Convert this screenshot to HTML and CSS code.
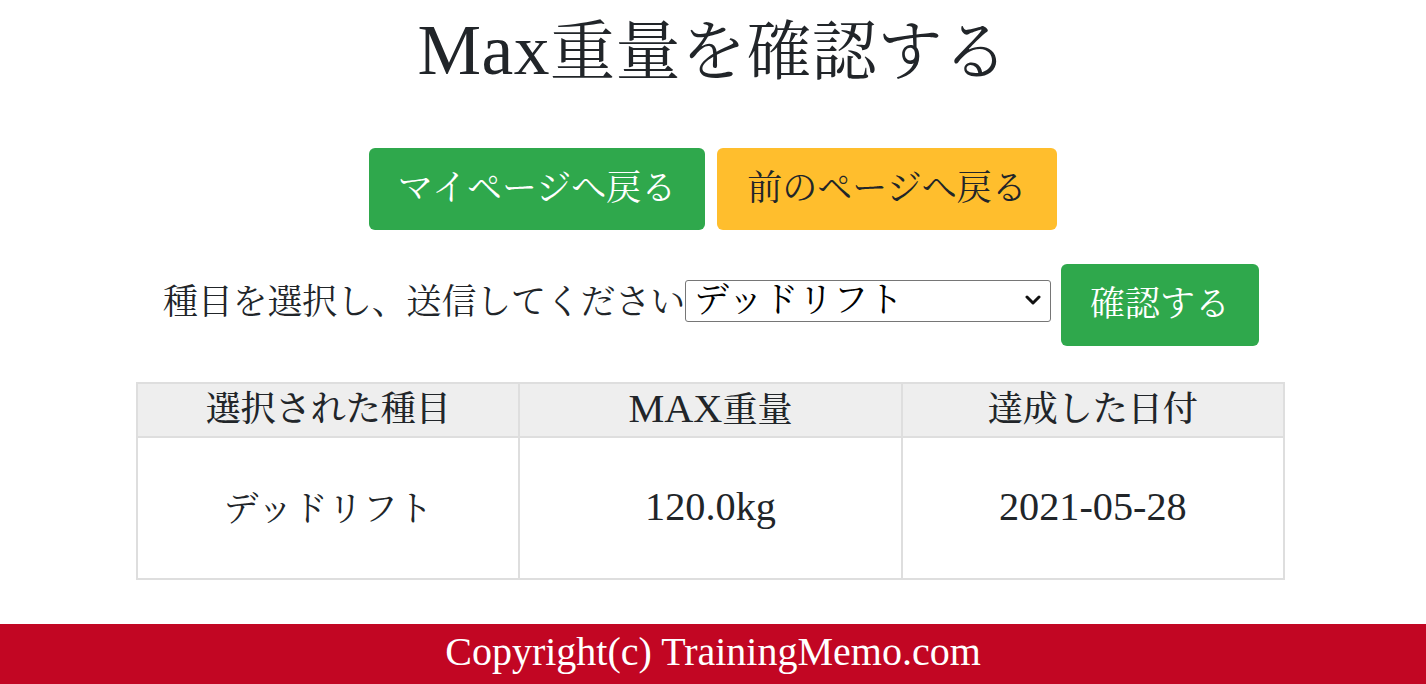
FILE: index.html
```html
<!DOCTYPE html>
<html lang="ja">
<head>
<meta charset="utf-8">
<title>Max重量を確認する</title>
<link rel="stylesheet" href="styles.css">
</head>
<body>
<main class="page">
  <h1 class="title"><span class="lat">Max</span>重量を確認する</h1>
  <div class="nav-buttons">
    <a class="btn btn-green btn-mypage" href="#">マイページへ戻る</a>
    <a class="btn btn-yellow" href="#">前のページへ戻る</a>
  </div>
  <form class="pick-form">
    <label class="pick-label" for="kind">種目を選択し、送信してください</label>
    <div class="select-wrap">
      <select id="kind" class="pick-select">
        <option>デッドリフト</option>
        <option>ベンチプレス</option>
        <option>スクワット</option>
      </select>
      <svg class="chevron" width="16" height="12" viewBox="0 0 16 12" aria-hidden="true">
        <path d="M2 3 L8 9 L14 3" fill="none" stroke="#111" stroke-width="3" stroke-linecap="round" stroke-linejoin="round"/>
      </svg>
    </div>
    <button type="button" class="btn btn-green btn-submit">確認する</button>
  </form>
  <table class="result">
    <thead>
      <tr><th>選択された種目</th><th><span class="lat">MAX</span>重量</th><th>達成した日付</th></tr>
    </thead>
    <tbody>
      <tr><td>デッドリフト</td><td><span class="lat">120.0kg</span></td><td><span class="lat">2021-05-28</span></td></tr>
    </tbody>
  </table>
</main>
<footer class="footer">Copyright(c) TrainingMemo.com</footer>
</body>
</html>
```
FILE: styles.css
```css
html, body {
  margin: 0;
  padding: 0;
}
body {
  font-family: "Liberation Serif", "Noto Serif CJK JP", "Noto Sans CJK JP", serif;
  color: #212529;
  background: #fff;
  display: flex;
  flex-direction: column;
  min-height: 684px;
}
.page {
  display: flex;
  flex-direction: column;
  align-items: center;
}
.title {
  margin: 14px 0 0;
  font-size: 65px;
  line-height: 77px;
  font-weight: normal;
  letter-spacing: 0.5px;
}
.title .lat {
  font-size: 1.1em;
  line-height: 0;
}
.nav-buttons {
  margin-top: 57px;
  display: flex;
  gap: 12px;
}
.btn {
  display: inline-block;
  box-sizing: border-box;
  height: 82px;
  padding: 0;
  font-family: inherit;
  font-size: 35px;
  line-height: 82px;
  border: none;
  border-radius: 6px;
  text-decoration: none;
  text-align: center;
  white-space: nowrap;
  cursor: pointer;
}
.btn-green {
  background: #2fa84c;
  color: #fff;
}
.btn-mypage {
  width: 336px;
}
.btn-yellow {
  background: #ffbe2d;
  color: #212529;
  width: 340px;
}
.pick-form {
  margin-top: 34px;
  display: flex;
  align-items: center;
  margin-right: 4px;
}
.pick-label {
  font-size: 35px;
  line-height: 42px;
  letter-spacing: -0.2px;
  margin-bottom: 4px;
}
.select-wrap {
  position: relative;
  display: flex;
  margin-bottom: 8px;
}
.pick-select {
  box-sizing: border-box;
  width: 366px;
  height: 42px;
  font-family: inherit;
  font-size: 35px;
  line-height: 40px;
  padding: 0 30px 2px 8px;
  border: 1px solid #767676;
  border-radius: 3px;
  background: #fff;
  color: #000;
  appearance: none;
  -webkit-appearance: none;
}
.chevron {
  position: absolute;
  right: 10px;
  top: 14px;
  pointer-events: none;
}
.btn-submit {
  margin-left: 10px;
  width: 198px;
}
.result {
  margin-top: 36px;
  margin-right: 5px;
  width: 1149px;
  border-collapse: collapse;
  table-layout: fixed;
  font-size: 35px;
}
.result .lat {
  font-size: 1.15em;
}
.result th,
.result td {
  border: 2px solid #dedede;
  text-align: center;
  padding: 0;
}
.result th {
  background: #eeeeee;
  height: 50px;
  line-height: 50px;
  font-weight: 500;
}
.result td {
  height: 136px;
  padding-bottom: 4px;
}
.footer {
  margin-top: auto;
  background: #c20623;
  color: #fff;
  text-align: center;
  font-size: 40px;
  line-height: 48px;
  padding: 4px 0 8px;
}
```
